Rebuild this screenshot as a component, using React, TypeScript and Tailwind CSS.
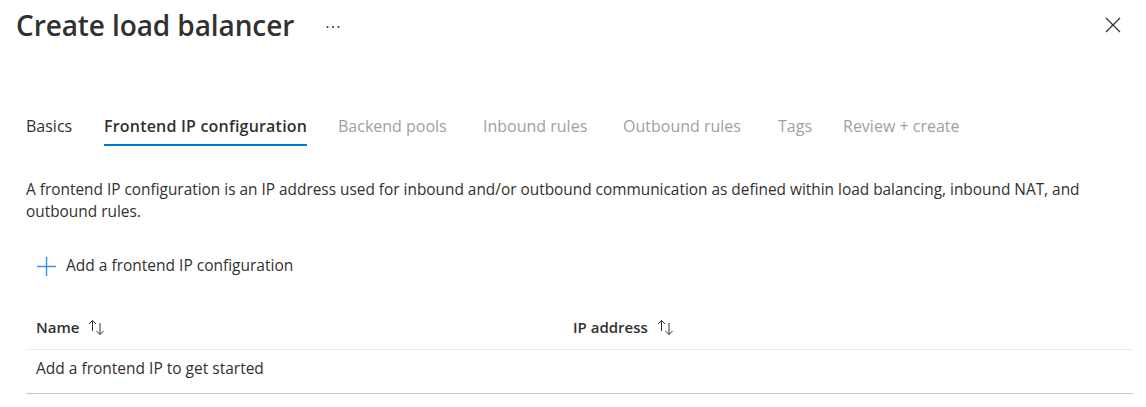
import React from "react";

const tabs = [
  { label: "Basics", state: "done", w: "w-[78px]" },
  { label: "Frontend IP configuration", state: "active", w: "w-[234px]" },
  { label: "Backend pools", state: "disabled", w: "w-[145px]" },
  { label: "Inbound rules", state: "disabled", w: "w-[140px]" },
  { label: "Outbound rules", state: "disabled", w: "w-[155px]" },
  { label: "Tags", state: "disabled", w: "w-[65px]" },
  { label: "Review + create", state: "disabled", w: "w-auto" },
];

function SortIcon() {
  return (
    <svg width="17" height="17" viewBox="0 0 17 17" fill="none" stroke="#323130" strokeWidth="1">
      <path d="M4.5 12V1.5M1 5L4.5 1.5L8 5" />
      <path d="M12 4V15.5M8.5 12L12 15.5L15.5 12" />
    </svg>
  );
}

export default function App() {
  return (
    <div
      className="w-[1146px] h-[407px] bg-white text-[#323130] overflow-hidden"
      style={{ fontFamily: '"Open Sans", "Noto Sans", sans-serif' }}
    >
      <div className="flex items-center h-[50px] pl-[16px] pr-[25px]">
        <h1 className="text-[28px] font-semibold leading-none tracking-[-0.1px]">Create load balancer</h1>
        <svg className="ml-[32px] mt-[4px]" width="14" height="4" viewBox="0 0 14 4" fill="#323130">
          <circle cx="1.5" cy="2" r="1" />
          <circle cx="7" cy="2" r="1" />
          <circle cx="12.5" cy="2" r="1" />
        </svg>
        <div className="flex-1" />
        <svg width="16" height="16" viewBox="0 0 16 16" stroke="#323130" strokeWidth="1.2">
          <path d="M1 1L15 15M15 1L1 15" />
        </svg>
      </div>

      <div className="flex pl-[26px] mt-[64px] h-[32px]">
        {tabs.map((t) => (
          <div key={t.label} className={"shrink-0 flex items-start " + t.w}>
            <span
              className={
                "inline-block text-[16px] leading-[24px] whitespace-nowrap " +
                (t.state === "active"
                  ? "font-semibold text-[#323130] pb-[6px] border-b-2 border-[#0078d4] tracking-[0.2px]"
                  : t.state === "done"
                  ? "text-[#323130]"
                  : "text-[#a19f9d]")
              }
            >
              {t.label}
            </span>
          </div>
        ))}
      </div>

      <p className="pl-[26px] pr-[30px] mt-[33px] text-[15.4px] leading-[22px]">
        A frontend IP configuration is an IP address used for inbound and/or outbound communication as defined within load balancing, inbound NAT, and outbound rules.
      </p>

      <div className="flex items-center pl-[37px] mt-[32px] h-[22px]">
        <svg width="19" height="19" viewBox="0 0 19 19" stroke="#4a90d9" strokeWidth="1.5">
          <path d="M9.5 0V19M0 9.5H19" />
        </svg>
        <span className="ml-[10px] text-[15.5px]">Add a frontend IP configuration</span>
      </div>

      <div className="ml-[26px] mr-[13px] mt-[28px]">
        <div className="flex items-center h-[45px] border-b border-[#edebe9]">
          <div className="w-[547px] pl-[10px] flex items-center gap-[9px]">
            <span className="text-[15px] font-semibold">Name</span>
            <SortIcon />
          </div>
          <div className="flex items-center gap-[9px]">
            <span className="text-[15px] font-semibold">IP address</span>
            <SortIcon />
          </div>
        </div>
        <div className="h-[44px] border-b border-[#c8c6c4] pl-[10px] pt-[6px]">
          <span className="text-[15.5px] leading-[22px]">Add a frontend IP to get started</span>
        </div>
      </div>
    </div>
  );
}
